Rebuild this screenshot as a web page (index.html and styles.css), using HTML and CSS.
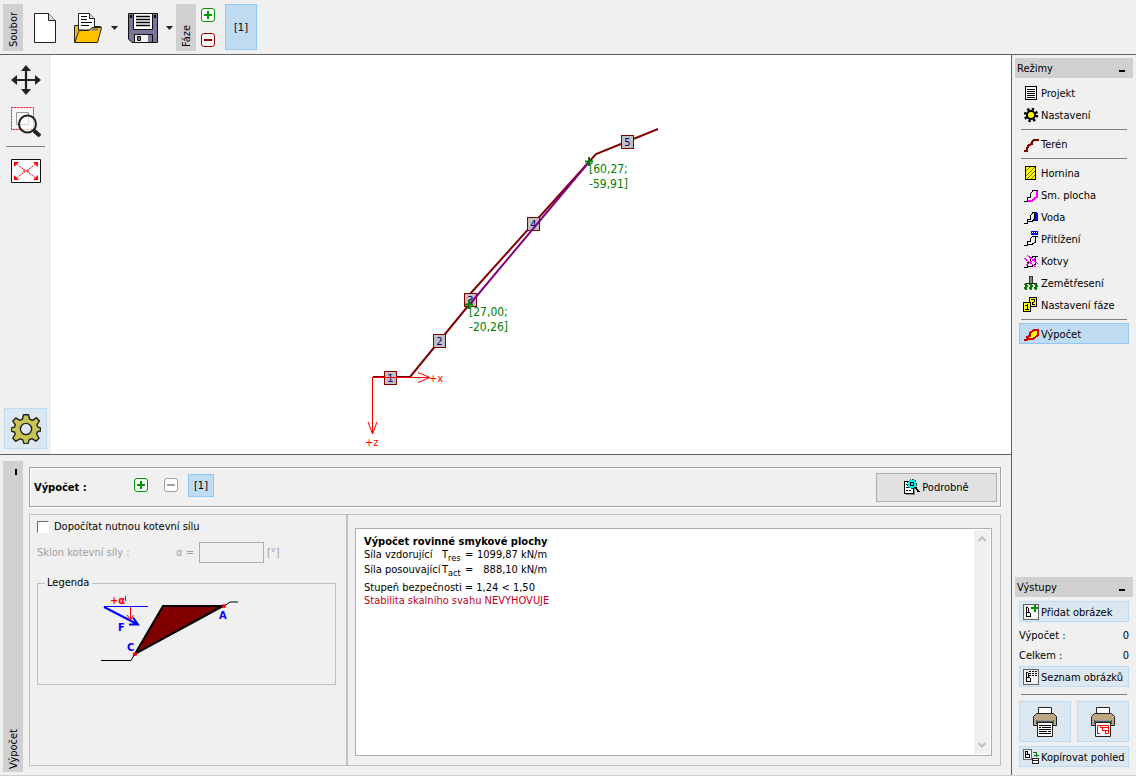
FILE: index.html
```html
<!DOCTYPE html>
<html lang="cs">
<head>
<meta charset="utf-8">
<title>Výpočet skalního svahu</title>
<link rel="stylesheet" href="styles.css">
</head>
<body>
<svg class="defs" aria-hidden="true">
  <symbol id="plus" viewBox="0 0 14 14"><rect x=".5" y=".5" width="13" height="13" rx="2.5" fill="#fff" stroke="#009800"/><path d="M3 7h8M7 3v8" stroke="#009800" stroke-width="2"/></symbol>
  <symbol id="minus" viewBox="0 0 14 14"><rect x=".5" y=".5" width="13" height="13" rx="2.5" fill="#fff" stroke="currentColor"/><path d="M3 7h8" stroke="currentColor" stroke-width="2"/></symbol>
  <symbol id="bdoc" viewBox="0 0 16 16"><path d="M.5.5h15v15H.5z" fill="#f3f3f3" stroke="#606060"/><path d="M3.500 3v10M3 3.500h2M5.500 4v4M3 8.500h4M7.500 9v4M3 12.500h5" fill="none" stroke="#000"/></symbol>
  <symbol id="printer" viewBox="0 0 24 30"><path d="M5.500 7V.5h13V7" fill="#fff" stroke="#222"/><path d="M3.500 6.500h17l3 3v9h-23v-9z" fill="#bda683" stroke="#222"/><path d="M3 13h18v4H3z" fill="#555"/><path d="M4 13.500h16" stroke="#999"/></symbol>
</svg>
<div class="app">
  <header class="topbar">
    <div class="strip strip-top"><span>Soubor</span></div>
    <button class="plain new-file" aria-label="Nový"><svg width="22" height="30" viewBox="0 0 22 30"><path d="M.5.5h14l7 7v22H.5z" fill="#fff" stroke="#222"/><path d="M14.500.5v7h7" fill="#ddd" stroke="#222"/></svg></button>
    <button class="plain open-file" aria-label="Otevřít"><svg width="28" height="30" viewBox="0 0 28 30"><path d="M.5 29.500v-17h5l2 3h10l2-2h7v4" fill="#ffb900" stroke="#222"/><path d="M4.500 17V.5h11l5 5V17z" fill="#fff" stroke="#222"/><path d="M15.500.5v5h5" fill="#ddd" stroke="#222"/><path d="M7 3.500h6M7 6.500h6M7 9.500h11M7 12.500h8" stroke="#000"/><path d="M.7 29.500 5 17.500h10l3-3h9.500l-4 15z" fill="#ffc000" stroke="#222"/><path d="M17 16.500h7" stroke="#777" stroke-width="2"/></svg></button>
    <button class="plain caret" aria-label="Další možnosti otevření"><svg width="7" height="4"><path d="M0 0h7L3.500 4z" fill="#222"/></svg></button>
    <button class="plain save-file" aria-label="Uložit"><svg width="30" height="30" viewBox="0 0 30 30"><path d="M.5.5h29v29H4L.5 26z" fill="#77759a" stroke="#111"/><path d="M2 2h2v3H2zM26 2h2v3h-2z"/><path d="M5.500.5h19v16h-19z" fill="#fff" stroke="#111"/><path d="M8 3.500h14M8 6.500h14M8 9.500h14M8 12.500h14" stroke="#000" stroke-width="1.300"/><path d="M6.500 21.500h18v8h-18z" fill="#77759a" stroke="#111"/><path d="M7 22h13v7H7z" fill="#f4f4f8"/><path d="M9.500 23.500h3v4h-3z" fill="#77759a" stroke="#111"/></svg></button>
    <button class="plain caret" aria-label="Další možnosti uložení"><svg width="7" height="4"><path d="M0 0h7L3.500 4z" fill="#222"/></svg></button>
    <div class="strip strip-top strip-phase"><span>Fáze</span></div>
    <div class="phase-edit">
      <button class="plain" aria-label="Přidat fázi"><svg width="14" height="14"><use href="#plus"/></svg></button>
      <button class="plain danger" aria-label="Odebrat fázi"><svg width="14" height="14"><use href="#minus"/></svg></button>
    </div>
    <button class="tab tab-tall">[1]</button>
  </header>

  <div class="body">
    <div class="center">
      <section class="workspace">
        <nav class="tools">
          <button class="plain tool" aria-label="Posun"><svg width="30" height="30" viewBox="0 0 30 30"><path d="M15 3v24M3 15h24" stroke="#222" stroke-width="2.200"/><path d="m15 0 5 6H10zM15 30l5-6H10zM0 15l6-5v10zM30 15l-6-5v10z" fill="#222"/></svg></button>
          <button class="plain tool" aria-label="Zvětšit výřez"><svg width="30" height="30" viewBox="0 0 30 30"><path d="M.5.500h22v22H.5z" fill="#fff" fill-opacity=".4" stroke="#f00" stroke-dasharray="2 1"/><path d="M5.500 5.500h12v12h-12z" fill="none" stroke="#999"/><circle cx="16.500" cy="17" r="8.500" fill="#fff" fill-opacity=".65" stroke="#222" stroke-width="2"/><path d="m23 23.500 6 5.500" stroke="#222" stroke-width="4"/></svg></button>
          <hr>
          <button class="plain tool" aria-label="Zobrazit vše"><svg width="30" height="24" viewBox="0 0 30 24"><path d="M.5.5h29v23H.5z" fill="#fff" stroke="#111"/><g stroke="#f00" fill="none"><path d="M12 10 4 4M18 10l8-6M12 14l-8 6M18 14l8 6" stroke-dasharray="2 1"/><path d="M13 10v4M17 10v4M13 12h4"/></g><path d="M3 3h5L3 8zM27 3h-5l5 5zM3 21h5l-5-5zM27 21h-5l5-5z" fill="#f00"/></svg></button>
          <button class="tool-settings" aria-label="Nastavení kresby"><svg width="30" height="30" viewBox="-15 -15 30 30"><path d="M-2.500-14.300h5l1 4.300 3 1.300 4-2.600 3 3.200-2.600 3.900 1.200 2.400 2.400.8v3l-3 .8-.9 2.200 2.400 4.200-3 3-4-2.500-3 1.200-1 3.800h-4l-1.200-3.800-2.700-1.100-4.300 2.400-3-3 2.500-4.200-.9-2-3.200-.9v-3l3.200-.9.900-2.300-2.500-4 3-3 4 2.400 2.700-1.100z" fill="#c8c455" stroke="#222" stroke-width="1.400" stroke-linejoin="round"/><circle r="5.600" fill="#dbe7f1" stroke="#222" stroke-width="1.400"/></svg></button>
        </nav>
        <div class="canvas">
          <svg class="drawing" viewBox="51 55 960 399" preserveAspectRatio="xMinYMin meet" role="img" aria-label="Profil svahu">
            <path d="M373 377h37L468 306 470 294 596 154 658 129" class="terrain"/>
            <g class="tags"><rect x="384.500" y="371.500" width="12" height="13"/><rect x="433.500" y="334.500" width="12" height="13"/><rect x="464.500" y="293.500" width="12" height="13"/><rect x="527.500" y="217.500" width="12" height="13"/><rect x="621.500" y="135.500" width="12" height="13"/></g>
            <g class="tag-text"><text x="390.500" y="382">1</text><text x="439.500" y="345">2</text><text x="470.500" y="304">3</text><text x="533.500" y="228">4</text><text x="627.500" y="146">5</text></g>
            <path d="M470 304 589 162" class="slip"/>
            <path d="M372.500 377v57M373 377.500h57M418 372.500l12 5-12 5M368 422l4.500 12 4.500-12" class="axis"/>
            <text x="429" y="382" class="axis-text">+x</text>
            <text x="365" y="446" class="axis-text">+z</text>
            <path d="M465 304.500h8M469 300v9M585 161.500h8M589 157v9" class="cross"/>
            <g class="coord"><text x="469" y="316">[27,00;</text><text x="469" y="331">-20,26]</text><text x="589" y="173">[60,27;</text><text x="589" y="188">-59,91]</text></g>
          </svg>
        </div>
      </section>

      <section class="bottom">
        <div class="strip strip-bottom"><i class="tick"></i><span>Výpočet</span></div>
        <div class="panel">
          <div class="calc-head">
            <b class="calc-title">Výpočet :</b>
            <button class="plain" aria-label="Přidat výpočet"><svg width="14" height="14"><use href="#plus"/></svg></button>
            <button class="plain muted" disabled aria-label="Odebrat výpočet"><svg width="14" height="14"><use href="#minus"/></svg></button>
            <button class="tab tab-small">[1]</button>
            <button class="details"><svg class="ico" viewBox="0 0 16 16"><path d="M2 15.500h8M10.500 8v8" stroke="#888"/><path d="M.5 2.500h9v12h-9z" fill="#fff" stroke="#000"/><path d="M2 5.500h2M2 8.500h2M2 11.500h2M5 11.500h2" stroke="#000"/><circle cx="8" cy="5" r="4.500" fill="#0ee" stroke="#066" stroke-dasharray="2 1"/><path d="M6 3h3v3H6z" fill="none" stroke="#000"/><path d="m11 8 4 5" stroke="#000" stroke-width="2"/></svg>Podrobně</button>
          </div>
          <div class="split">
            <form class="inputs">
              <label class="check"><input type="checkbox"><span>Dopočítat nutnou kotevní sílu</span></label>
              <div class="slope"><label class="slope-name" for="alpha">Sklon kotevní síly :</label><label class="slope-sym" for="alpha">α =</label><input id="alpha" type="text" disabled><span>[°]</span></div>
              <fieldset class="legend"><legend>Legenda</legend>
                <svg width="144" height="70" viewBox="98 595 144 70" role="img" aria-label="Schéma kotevní síly">
                  <path d="M101 660.500h30l4-7M223 607l7-5h8" fill="none" stroke="#000"/>
                  <path d="M163 606h60l-88 48z" fill="#800000" stroke="#000" stroke-width="2"/>
                  <path d="M104 606.500h44" stroke="#00f"/><path d="m104 607 33 17M129 624.500h9l-5-7" fill="none" stroke="#00f" stroke-width="2"/>
                  <path d="M130.500 607v13M127 615l3.500 5 3-5" fill="none" stroke="#f00"/>
                  <circle cx="224" cy="606" r="2" fill="#f00"/><circle cx="135" cy="654" r="2" fill="#f00"/>
                  <text x="110" y="604" class="dia-red">+α</text><path d="M125.500 596v5" stroke="#f00"/>
                  <g class="dia-blue"><text x="118" y="631">F</text><text x="127" y="651">C</text><text x="219" y="619">A</text></g>
                </svg>
              </fieldset>
            </form>
            <div class="output">
              <div class="report">
                <div class="report-text">
                  <h1>Výpočet rovinné smykové plochy</h1>
                  <table>
                    <tr><td>Síla vzdorující</td><td>T<sub>res</sub></td><td>=</td><td class="num">1099,87</td><td>kN/m</td></tr>
                    <tr><td>Síla posouvající</td><td>T<sub>act</sub></td><td>=</td><td class="num">888,10</td><td>kN/m</td></tr>
                  </table>
                  <p>Stupeň bezpečnosti = 1,24 &lt; 1,50</p>
                  <p class="fail">Stabilita skalního svahu NEVYHOVUJE</p>
                </div>
                <div class="scroll" aria-hidden="true"><svg width="8" height="6"><path d="m.5 5 3.500-3.500L7.500 5" class="chev"/></svg><svg width="8" height="6"><path d="M.5 1 4 4.500 7.500 1" class="chev"/></svg></div>
              </div>
            </div>
          </div>
        </div>
      </section>
    </div>

    <aside class="side">
      <div class="side-head"><span>Režimy</span><i class="collapse"></i></div>
      <nav class="modes">
        <button class="mode"><svg class="ico" viewBox="0 0 16 16"><path d="M2.500 1.500h11v13h-11z" fill="#fff" stroke="#000"/><path d="M4 4.500h8M4 6.500h8M4 8.500h8M4 10.500h8M4 12.500h8" stroke="#000"/></svg>Projekt</button>
        <button class="mode"><svg class="ico smooth" viewBox="0 0 16 16"><circle cx="8" cy="8" r="5.700" fill="none" stroke="#000" stroke-width="3" stroke-dasharray="2.300 2.177"/><circle cx="8" cy="8" r="4" fill="#ff0" stroke="#000" stroke-width="2"/></svg>Nastavení</button>
        <hr>
        <button class="mode"><svg class="ico" viewBox="0 0 16 16"><path d="M4 15h7l4-4V6" fill="none" stroke="#fff"/><path d="M1 15h3v-3l2-3 3-1V6l2-2h5" fill="none" stroke="#800000" stroke-width="2"/></svg>Terén</button>
        <hr>
        <button class="mode"><svg class="ico" viewBox="0 0 16 16"><path d="M2.500 1.500h10v13h-10z" fill="#ff0" stroke="#000"/><path d="m3 6 4-4M3 11l9-9M4 14l8-8M8 14l4-4" stroke="#776d00"/></svg>Hornina</button>
        <button class="mode"><svg class="ico" viewBox="0 0 16 16"><path d="M1 14.500h3v-4h3v-3l3-4h5" fill="none" stroke="#000"/><path d="M5 14h4l3-3 2-1V4" fill="none" stroke="#f0f" stroke-width="2"/></svg>Sm. plocha</button>
        <button class="mode"><svg class="ico" viewBox="0 0 16 16"><path d="M11 3h3l1 2v7h-4z" fill="#00f"/><path d="M1 14.500h3v-4h3v-3l3-4h3M5 12.500h4l2-2v-7" fill="none" stroke="#000"/></svg>Voda</button>
        <button class="mode"><svg class="ico" viewBox="0 0 16 16"><path d="M8 0h7v4H8z" fill="#00f"/><path d="M9 1.500h5" stroke="#fff" stroke-dasharray="1 1"/><path d="M1 14.500h3v-4h3v-3l3-2h5M12.500 6v5l-3 2H4" fill="none" stroke="#000"/></svg>Přitížení</button>
        <button class="mode"><svg class="ico" viewBox="0 0 16 16"><path d="M1 14.500h3v-5h3v-3l3-3h5M12.500 4v7l-3 2H4" fill="none" stroke="#000"/><path d="m1 5 12 9M4 2l11 9M3 12l10-7" fill="none" stroke="#f0f"/></svg>Kotvy</button>
        <button class="mode"><svg class="ico" viewBox="0 0 16 16"><path d="M6.500 1.500h3v7h-3z" fill="#888" stroke="#333"/><path d="M2 8.500h12" stroke="#000"/><path d="M2 9l2 2-2 2 2 2M7 9l2 2-2 2 2 2M12 9l2 2-2 2 2 2" fill="none" stroke="#008000" stroke-width="2"/></svg>Zemětřesení</button>
        <button class="mode"><svg class="ico" viewBox="0 0 16 16"><path d="M6.500.5h7v9h-7z" fill="#ff0" stroke="#000"/><path d="M.5 5.500h7v9h-7z" fill="#ff0" stroke="#000"/><path d="M8 2.500h4M11.500 3v2M9 5.500h2M9.500 6v2M9 7.500h3M2 8.500h2M4.500 7v6M2 12.500h4" fill="none" stroke="#000"/></svg>Nastavení fáze</button>
        <hr>
        <button class="mode active"><svg class="ico" viewBox="0 0 16 16"><path d="m6 12 2-5 3-3h4v5l-5 4z" fill="#ff0"/><path d="M1 14h3v-3l3-1V7l4-3h4v5l-5 4H4" fill="none" stroke="#d00000" stroke-width="2"/></svg>Výpočet</button>
      </nav>
      <div class="side-head outputs-head"><span>Výstupy</span><i class="collapse"></i></div>
      <div class="outputs">
        <button class="out"><svg class="ico" viewBox="0 0 16 16"><use href="#bdoc"/><path d="M8 1h7v7H8z" fill="#f3f3f3"/><path d="M8 4h7M11.500 1v7" stroke="#009000" stroke-width="2"/></svg>Přidat obrázek</button>
        <dl><div><dt>Výpočet :</dt><dd>0</dd></div><div><dt>Celkem :</dt><dd>0</dd></div></dl>
        <button class="out"><svg class="ico" viewBox="0 0 16 16"><use href="#bdoc"/><path d="M6 1h9v6H6z" fill="#f3f3f3"/><path d="M6 2.500h2m1 0h2m1 0h2M6 4.500h2m1 0h2m1 0h2M6 6.500h2m1 0h2m1 0h2" stroke="#000"/></svg>Seznam obrázků</button>
        <hr>
        <div class="print-row">
          <button class="print" aria-label="Tisk protokolu"><svg width="24" height="30" viewBox="0 0 24 30"><use href="#printer"/><path d="M4.500 15.500h15v14h-15z" fill="#fff" stroke="#222"/><path d="M6 18.500h12M6 20.500h2m1 0h9M6 22.500h12M6 24.500h8m1 0h3M6 26.500h12" stroke="#000"/></svg></button>
          <button class="print" aria-label="Tisk obrázku"><svg width="24" height="30" viewBox="0 0 24 30"><use href="#printer"/><path d="M4.500 15.500h15v14h-15z" fill="#fff" stroke="#222"/><path d="M9 18.500H6.500v8H9M8 18.500h9.500v8h-3v-3h-3v-3h-2v-2M11 20.500h6M13 23.500h4" fill="none" stroke="#f00"/></svg></button>
        </div>
        <button class="out"><svg class="ico" viewBox="0 0 16 16"><path d="M.5.5h8v10h-8z" fill="#f3f3f3" stroke="#666"/><path d="M2.500 2v6M2 2.500h2v3H2M2 5.500h4v3H2" fill="none" stroke="#000"/><path d="M10 3.500h3v4M11 6.500h5" fill="none" stroke="#008000"/><path d="M9.500 9.500h6v5h-6zM9 11.500h7" fill="#fff" stroke="#222"/></svg>Kopírovat pohled</button>
      </div>
    </aside>
  </div>
</div>
</body>
</html>
```

FILE: styles.css
```css
* { box-sizing: border-box; }
body {
  margin: 0;
  background: #f0f0f0;
  color: #000;
  font: 11px/14px "DejaVu Sans Condensed", Tahoma, "DejaVu Sans", sans-serif;
}
button, input { font: inherit; color: inherit; }
button { margin: 0; padding: 0; }
svg { display: block; flex: none; }
.defs { position: absolute; width: 0; height: 0; }

.app { display: flex; flex-direction: column; height: 100vh; border-bottom: 1px solid #d0d0d0; }
.body { display: flex; flex: 1; min-height: 0; }
.center { display: flex; flex: 1; flex-direction: column; min-width: 0; }
.plain { display: block; border: 0; background: none; }
.danger { color: #980000; }
.muted { color: #a0a0a0; }

/* Top toolbar */
.topbar { display: flex; align-items: center; height: 55px; padding: 0 3px; border-bottom: 1px solid #606060; }
.strip { display: flex; flex: none; width: 20px; background: #d0d0d0; justify-content: center; }
.strip span { writing-mode: vertical-rl; transform: rotate(180deg); line-height: 18px; }
.strip-top { height: 47px; align-items: flex-end; justify-content: flex-end; padding-bottom: 3px; }
.strip-phase { margin-left: 3px; }
.new-file { margin-left: 11px; }
.open-file { margin-left: 18px; }
.caret { padding: 2px 0 0 9px; }
.save-file { margin-left: 10px; }
.new-file, .open-file, .save-file { margin-top: 2px; }
.save-file + .caret { padding-left: 8px; }
.phase-edit { display: grid; gap: 11px; margin: 0 10px 0 5px; }
.tab { padding-top: 2px; border: 1px solid #91c8f6; background: #c0dcf3; text-align: center; }
.tab-tall { width: 32px; height: 46px; }
.tab-small { width: 26px; height: 23px; }

/* Drawing area */
.workspace { display: flex; flex: 1; min-height: 0; border-bottom: 1px solid #606060; }
.tools { display: flex; flex-direction: column; flex: none; align-items: center; width: 51px; padding: 10px 0 5px; }
.tool + .tool { margin-top: 12px; }
.tools hr { width: 39px; margin: 9px 0 12px; }
.tool-settings { display: grid; place-items: center; width: 43px; height: 41px; margin-top: auto; border: 1px solid #bddcf4; background: #dbe7f1; }
.canvas { flex: 1; min-width: 0; background: #fff; }
.drawing { width: 100%; height: 100%; }
.terrain { fill: none; stroke: #800000; stroke-width: 2; }
.slip { stroke: #800080; stroke-width: 2; }
.tags rect { fill: #c0c0c0; stroke: #800000; }
.tag-text { fill: #000080; text-anchor: middle; }
.axis { fill: none; stroke: #f00; }
.axis-text { fill: #f00; font-size: 11px; }
.cross { stroke: #008000; stroke-width: 2; }
.coord { fill: #008000; font-size: 12px; }
hr { width: 100%; height: 1px; margin: 0; border: 0; background: #808080; }

/* Calculation panel */
.bottom { display: flex; flex: none; height: 320px; padding: 6px 10px 0 3px; }
.strip-bottom { flex-direction: column; align-items: flex-end; justify-content: space-between; margin-bottom: 3px; padding: 8px 0 3px; }
.tick { width: 2px; height: 6px; margin-right: 6px; background: #000; }
.panel { display: flex; flex: 1; flex-direction: column; min-width: 0; gap: 7px; padding: 6px 0 9px 6px; }
.calc-head { display: flex; align-items: center; height: 40px; padding: 0 3px 0 4px; border: 1px solid #a0a0a0; box-shadow: inset 1px 1px #fff, 1px 1px #fff; }
.calc-title { width: 100px; padding-top: 2px; }
.calc-head .plain { margin: 0 16px 4px 0; }
.calc-head .tab { margin: 0 0 4px -6px; }
.details { display: flex; align-items: center; justify-content: center; gap: 2px; width: 121px; height: 29px; margin-left: auto; padding-top: 2px; border: 1px solid #adadad; background: #e1e1e1; }
.split { display: flex; flex: 1; min-height: 0; border: 1px solid #c0c0c0; }
.inputs { flex: none; width: 318px; padding: 5px 10px 0 7px; border-right: 2px solid #c0c0c0; }
.check { display: flex; align-items: center; gap: 5px; }
.check input { appearance: none; width: 12px; height: 12px; margin: 0; border: 1px solid; border-color: #696969 #fff #fff #696969; background: #fff; }
.slope { display: flex; align-items: center; height: 21px; margin-top: 8px; color: #a0a0a0; }
.slope-name { width: 139px; }
.slope-sym { width: 23px; }
.slope input { width: 65px; height: 21px; margin-right: 3px; border: 1px solid #abadb3; background: #f0f0f0; }
.legend { height: 109px; margin: 13px 0 0; padding: 5px 0 0 60px; border: 1px solid #c0c0c0; }
.legend legend { margin-left: -53px; padding: 0 3px 0 2px; }
.dia-red { fill: #f00; font-weight: bold; }
.dia-blue { fill: #00f; font-weight: bold; }
.output { flex: 1; padding: 13px 8px 9px 7px; }
.report { display: flex; height: 100%; border: 1px solid #abadb3; background: #fff; }
.report-text { flex: 1; padding: 6px 8px; }
.report h1 { margin: 0; font-size: 11px; line-height: 14px; }
.report table { border-collapse: collapse; margin-bottom: 2px; }
.report td { height: 15px; padding: 0; line-height: 12px; vertical-align: top; white-space: nowrap; }
.report td:nth-child(1) { width: 78px; }
.report td:nth-child(2) { width: 23px; }
.report td:nth-child(3) { width: 12px; }
.report .num { width: 43px; padding-right: 3px; text-align: right; }
.report sub { font-size: 9px; line-height: 0; }
.report p { margin: 0; line-height: 13px; }
.fail { color: #c00020; }
.scroll { display: flex; flex-direction: column; align-items: center; justify-content: space-between; width: 16px; margin: 1px; padding: 6px 0; background: #f0f0f0; }
.chev { fill: none; stroke: #bfbfbf; stroke-width: 2; }

/* Side panel */
.side { display: flex; flex-direction: column; flex: none; width: 125px; padding: 3px 3px 8px; border-left: 1px solid #606060; }
.side-head { display: flex; align-items: center; justify-content: space-between; flex: none; height: 20px; padding: 0 8px 0 2px; background: #d0d0d0; }
.side-head span { padding-top: 1px; }
.collapse { width: 6px; height: 2px; margin-top: 6px; background: #000; }
.modes, .outputs { display: flex; flex-direction: column; padding: 4px; }
.outputs { padding-bottom: 0; }
.side hr { width: auto; margin: 3px 2px; }
.mode, .out { display: flex; align-items: center; gap: 2px; border: 1px solid transparent; background: none; padding: 2px 0 0 3px; white-space: nowrap; }
.mode { height: 22px; }
.mode.active { height: 21px; border-color: #91c8f6; background: #c0dcf3; }
.ico { width: 16px; height: 16px; margin-bottom: 2px; shape-rendering: crispEdges; }
.ico.smooth { shape-rendering: auto; }
.outputs-head { margin-top: auto; }
.out { height: 21px; border-color: #bddcf4; background: #dbe7f1; }
.outputs dl { margin: 4px 0 0; }
.outputs dl div { display: flex; justify-content: space-between; line-height: 20px; }
.outputs dd { margin: 0; }
.outputs hr { margin: 7px 2px 6px; }
.print-row { display: grid; grid-template-columns: 1fr 1fr; gap: 6px; margin-bottom: 4px; }
.print { display: grid; place-items: center; height: 41px; border: 1px solid #bddcf4; background: #dbe7f1; }
```
